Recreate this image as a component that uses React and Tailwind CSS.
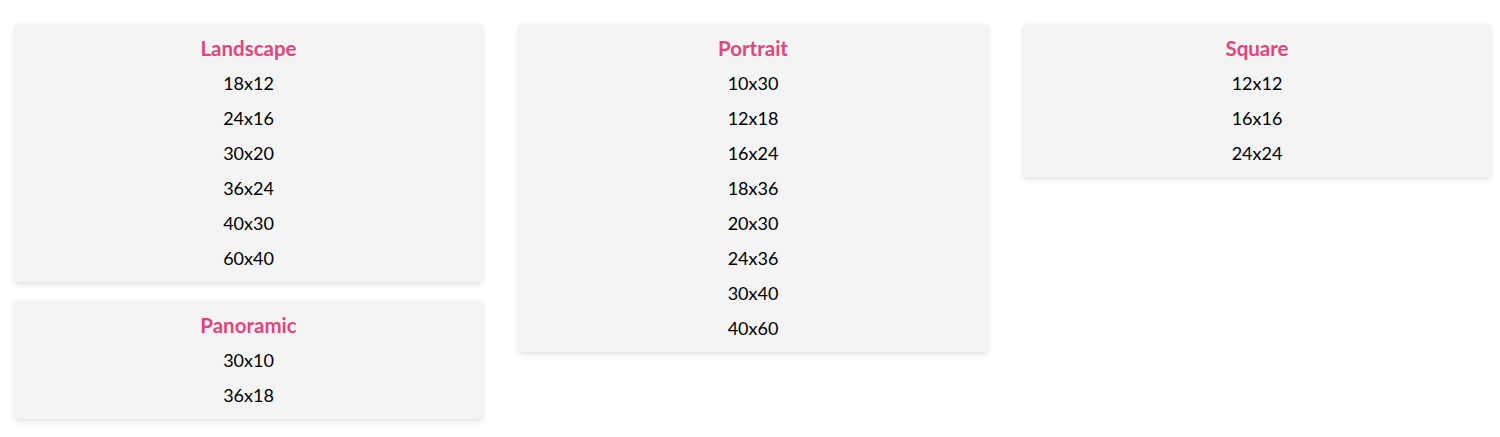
import React from "react";

const Card = ({ title, items }) => (
  <div className="bg-[#f4f4f4] pt-[7px] pb-[6px] text-center shadow-[0_2px_6px_rgba(0,0,0,0.13)]">
    <div className="h-[35px] leading-[35px] font-bold text-[#e2457c] text-[20.5px]">{title}</div>
    {items.map((s) => (
      <div key={s} className="h-[35px] leading-[35px] text-[18px] text-black">
        {s}
      </div>
    ))}
  </div>
);

export default function App() {
  return (
    <div
      className="bg-white w-[1500px] h-[437px] pl-[15px] pt-[24px]"
      style={{ fontFamily: "Lato, 'Noto Sans', sans-serif" }}
    >
      <div className="grid grid-cols-[467px_468px_466px] gap-x-[37px] items-start">
        <div className="flex flex-col gap-[19px]">
          <Card title="Landscape" items={["18x12", "24x16", "30x20", "36x24", "40x30", "60x40"]} />
          <Card title="Panoramic" items={["30x10", "36x18"]} />
        </div>
        <Card
          title="Portrait"
          items={["10x30", "12x18", "16x24", "18x36", "20x30", "24x36", "30x40", "40x60"]}
        />
        <Card title="Square" items={["12x12", "16x16", "24x24"]} />
      </div>
    </div>
  );
}
